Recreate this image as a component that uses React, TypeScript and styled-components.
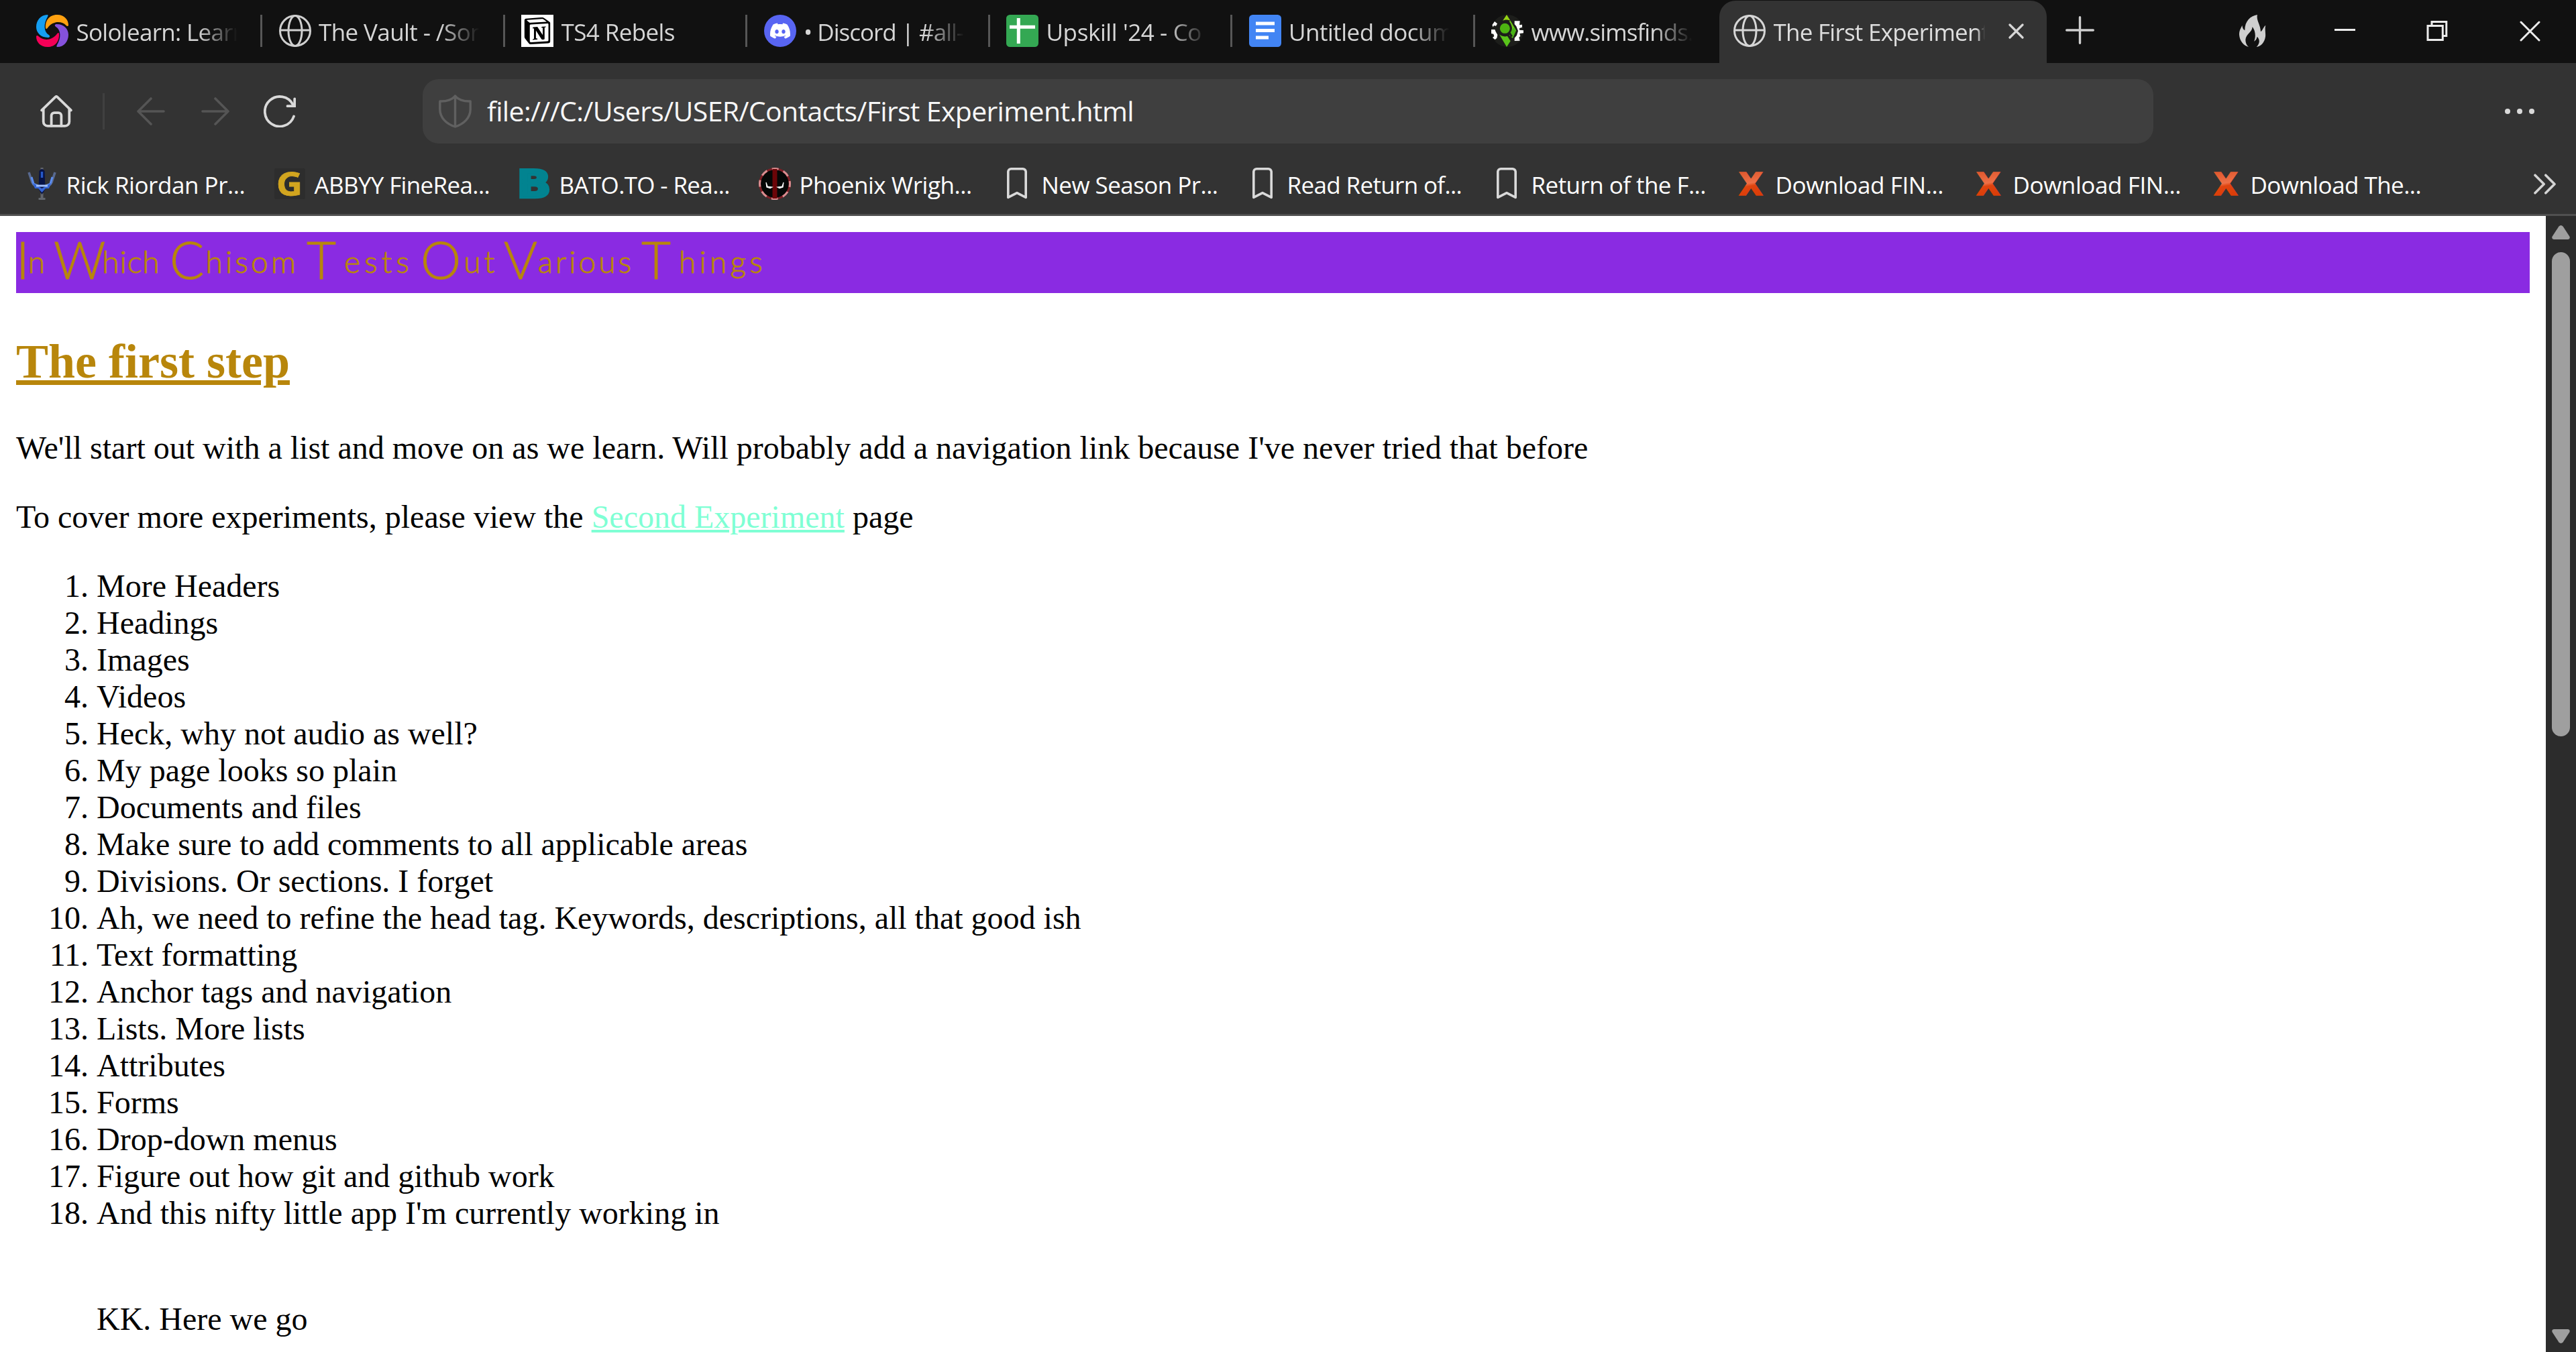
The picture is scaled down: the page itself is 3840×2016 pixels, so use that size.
import React from "react";
import styled, { createGlobalStyle } from "styled-components";
import { SiDiscord, SiNotion } from "react-icons/si";

const UI_FONT = `"Open Sans", "Noto Sans", sans-serif`;
const PAGE_FONT = `"Liberation Serif", "Times New Roman", serif`;

const GlobalStyle = createGlobalStyle`
  html, body { margin: 0; padding: 0; background: #fff; }
  body { overflow: hidden; }
  * { box-sizing: border-box; }
`;

const Window = styled.div`
  display: flex;
  flex-direction: column;
  width: 3840px;
  height: 2016px;
  overflow: hidden;
  background: #333;
  font-family: ${UI_FONT};
`;

/* ---------- tab strip ---------- */

const TabStrip = styled.div`
  display: flex;
  height: 94px;
  flex: none;
  padding-left: 29.5px;
  background: #111;
`;

const TabItem = styled.div`
  display: flex;
  flex: none;
  align-items: center;
  width: 361.5px;
  padding: 0 0 2px 24.5px;
`;

const TabIcon = styled.div<{ $bg?: string; $radius?: number }>`
  display: flex;
  flex: none;
  align-items: center;
  justify-content: center;
  width: 48px;
  height: 48px;
  border-radius: ${(p) => p.$radius ?? 0}px;
  background: ${(p) => p.$bg ?? "transparent"};
`;

const TabTitle = styled.div<{ $spacing: number }>`
  width: 242px;
  margin-left: 11.5px;
  padding-top: 4px;
  overflow: hidden;
  white-space: nowrap;
  font-size: 35px;
  line-height: 60px;
  letter-spacing: ${(p) => p.$spacing}px;
  color: #d6d6d6;
  mask-image: linear-gradient(to right, #000 75%, transparent 99%);
`;

const TabDivider = styled.div`
  width: 3px;
  height: 48px;
  margin-left: auto;
  background: #565656;
`;

const ActiveTab = styled.div`
  display: flex;
  flex: none;
  align-items: center;
  width: 488px;
  height: 93px;
  margin: 1px 0 0 3px;
  padding: 0 0 3px 21px;
  border-radius: 24px 24px 0 0;
  background: #333;
`;

const ActiveTitle = styled(TabTitle)`
  width: 315px;
  color: #dedede;
  mask-image: linear-gradient(to right, #000 96%, transparent 100%);
`;

const TabClose = styled.div`
  display: flex;
  margin-left: 35px;
`;

const NewTab = styled.div`
  display: flex;
  align-items: center;
  margin-left: 28px;
  padding-bottom: 4px;
`;

const WindowControls = styled.div`
  display: flex;
  align-items: center;
  margin-left: auto;
  padding: 0 53px 2px 0;
`;

const Control = styled.div<{ $gap?: number }>`
  display: flex;
  margin-left: ${(p) => p.$gap ?? 0}px;
`;

/* ---------- toolbar ---------- */

const Toolbar = styled.div`
  display: flex;
  align-items: center;
  flex: none;
  height: 144px;
  padding: 0 62px 0 60px;
`;

const ToolButton = styled.div<{ $ml?: number; $color?: string }>`
  display: flex;
  flex: none;
  margin-left: ${(p) => p.$ml ?? 0}px;
  color: ${(p) => p.$color ?? "#d9d9d9"};
`;

const ToolDivider = styled.div`
  flex: none;
  width: 3px;
  height: 54px;
  margin-left: 45px;
  background: #404040;
`;

const AddressBar = styled.div`
  display: flex;
  align-items: center;
  flex: none;
  width: 2580px;
  height: 96px;
  margin-left: 189px;
  padding-left: 24px;
  border-radius: 24px;
  background: #3f3f3f;
  color: #606060;
`;

const AddressText = styled.div`
  margin-left: 23px;
  padding-bottom: 2px;
  font-size: 41px;
  letter-spacing: -0.66px;
  white-space: nowrap;
  color: #f7f7f7;
`;

const MenuDots = styled.div`
  display: flex;
  gap: 10px;
  margin-left: auto;
`;

const Dot = styled.i`
  width: 8px;
  height: 8px;
  border-radius: 50%;
  background: #d9d9d9;
`;

/* ---------- bookmarks ---------- */

const BookmarkBar = styled.div`
  display: flex;
  align-items: center;
  flex: none;
  height: 84px;
  padding: 0 30px 9px 38px;
  border-bottom: 3px solid #505050;
`;

const Bookmark = styled.div<{ $width: number }>`
  display: flex;
  flex: none;
  align-items: center;
  width: ${(p) => p.$width}px;
`;

const BookmarkIcon = styled.div`
  display: flex;
  flex: none;
  width: 48px;
  height: 48px;
`;

const BookmarkLabel = styled.div<{ $spacing: number }>`
  margin-left: 12.5px;
  padding-top: 3px;
  font-size: 35px;
  line-height: 56px;
  letter-spacing: ${(p) => p.$spacing}px;
  white-space: nowrap;
  color: #fff;
`;

const Overflow = styled.div`
  display: flex;
  margin-left: auto;
`;

/* ---------- page ---------- */

const Viewport = styled.div`
  display: flex;
  flex: 1;
  min-height: 0;
  background: #fff;
`;

const Page = styled.main`
  flex: 1;
  min-width: 0;
  padding: 24px;
  overflow: hidden;
  font-family: ${PAGE_FONT};
  font-size: 48px;
  line-height: 55px;
  color: #000;
`;

const Banner = styled.h1`
  display: flex;
  height: 91px;
  margin: 0;
  background: blueviolet;
  color: darkgoldenrod;
  font-family: Lato, "Open Sans", sans-serif;
  font-size: 46px;
  font-weight: 300;
  line-height: 87px;
  -webkit-text-stroke: 0.9px darkgoldenrod;
`;

const BannerWord = styled.span<{ $width: number; $spacing: number; $cap: number }>`
  display: block;
  flex: none;
  width: ${(p) => p.$width}px;
  letter-spacing: ${(p) => p.$spacing}px;
  white-space: nowrap;

  &::first-letter {
    font-size: 76px;
    line-height: 0;
    letter-spacing: ${(p) => p.$cap}px;
    vertical-align: -9px;
  }
`;

const Heading = styled.h2`
  margin: 61px 0 60px;
  font-size: 72px;
  line-height: 82px;
  color: darkgoldenrod;
  text-decoration: underline;
`;

const Paragraph = styled.p`
  margin: 48px 0;
`;

const PageLink = styled.a`
  color: aquamarine;
  text-decoration: underline;
`;

const List = styled.ol`
  margin: 48px 0;
  padding-left: 120px;
`;

const Trailing = styled.p`
  margin: 103px 0 0;
`;

const Scrollbar = styled.div`
  display: flex;
  flex-direction: column;
  align-items: center;
  flex: none;
  width: 45px;
  padding: 14px 0 13px;
  background: #2c2c2c;
`;

const Thumb = styled.div`
  width: 27px;
  height: 722px;
  margin: 19px 0 auto;
  border-radius: 13.5px;
  background: #9f9f9f;
`;

/* ---------- icons ---------- */

const SololearnIcon = () => (
  <svg width="48" height="48" viewBox="0 0 144 144">
    <path fill="#149ef2" d="M50 0C20 0 0 25 0 55C0 80 20 102 52 102C62 102 63 95 56 90C33 76 32 40 51 9C54 3 53 0 50 0Z" />
    <path fill="#ffa110" d="M42 58C40 30 55 0 94 0C125 0 144 22 144 46C144 52 138 52 134 48C115 28 75 25 50 60C46 64 42 64 42 58Z" />
    <path fill="#8551dc" d="M94 144C124 144 144 119 144 89C144 64 124 42 92 42C82 42 81 49 88 54C111 68 112 104 93 135C90 141 91 144 94 144Z" />
    <path fill="#f50057" d="M102 86C104 114 89 144 50 144C19 144 0 122 0 98C0 92 6 92 10 96C29 116 69 119 94 84C98 80 102 80 102 86Z" />
  </svg>
);

const GlobeIcon = ({ color = "#cfcfcf" }: { color?: string }) => (
  <svg width="48" height="48" viewBox="0 0 48 48" fill="none" stroke={color} strokeWidth="3">
    <circle cx="24" cy="24" r="22.5" />
    <ellipse cx="24" cy="24" rx="10" ry="22.5" />
    <path d="M1.5 23h45" />
  </svg>
);

const SheetsIcon = () => (
  <svg width="48" height="48" viewBox="0 0 48 48">
    <rect width="48" height="48" rx="5.5" fill="#34a853" />
    <path d="M5 18.3h38M18.3 5v38" stroke="#fff" strokeWidth="5" />
  </svg>
);

const DocsIcon = () => (
  <svg width="48" height="48" viewBox="0 0 48 48">
    <rect width="48" height="48" rx="5.5" fill="#4285f4" />
    <path d="M10 13h28M10 23.5h28M10 34h19" stroke="#fff" strokeWidth="5" />
  </svg>
);

const SimsIcon = () => (
  <svg width="48" height="48" viewBox="0 0 144 144">
    <circle cx="72" cy="72" r="72" fill="#1d1e1b" />
    <path fill="#95d413" d="M69 0L86 27C74 21 60 21 51 27Z" />
    <path fill="#6ccb16" d="M86 27L111 70L96 104L80 92C96 74 96 48 80 30Z" />
    <path fill="#49b316" d="M96 104L78 78L104 56L111 70Z" />
    <path fill="#59c41a" d="M36 88C45 96 60 100 72 95L86 118L69 144Z" />
    <circle cx="61" cy="61" r="27" fill="#4db511" stroke="#1d1e1b" strokeWidth="9" />
    <path d="M82 82L92 98" stroke="#1d1e1b" strokeWidth="9" />
    <g fill="#fff">
      <path d="M4 46L15 30L27 40L21 50L12 48L8 55Z" />
      <path d="M0 66L16 66L20 76L28 90L25 104L17 111L6 103L13 96L10 86L0 84Z" />
      <path d="M104 28L128 28L126 46L138 44L138 56L126 60L126 68L144 70L144 82L127 84L130 96L124 101L128 116L104 117L104 104L114 92L120 72L112 52L104 42Z" />
    </g>
  </svg>
);

const CrossIcon = ({ size, stroke, color }: { size: number; stroke: number; color: string }) => (
  <svg width={size} height={size} viewBox={`0 0 ${size} ${size}`} stroke={color} strokeWidth={stroke} strokeLinecap="round">
    <path d={`M2 2L${size - 2} ${size - 2}M${size - 2} 2L2 ${size - 2}`} />
  </svg>
);

const PlusIcon = () => (
  <svg width="43" height="42" viewBox="0 0 43 42" stroke="#cfcfcf" strokeWidth="3.4" strokeLinecap="round">
    <path d="M21.5 1.7v38.6M1.7 21h39.6" />
  </svg>
);

const FireIcon = () => (
  <svg width="40" height="48" viewBox="0 0 120 144" fill="#cfcfcf">
    <path d="M81 0C75 25 95 42 96 76C104 70 108 55 118 47C113 65 119 80 117 98C113 125 96 141 77 144C93 128 93 110 80 98C78 108 74 115 66 119C75 100 73 72 59 54C57 80 30 85 28 112C28 126 33 138 42 144C20 138 2 118 0 90C-1 70 8 60 13 47C14 58 18 66 25 70C24 32 48 5 81 0Z" />
  </svg>
);

const RestoreIcon = () => (
  <svg width="32" height="30" viewBox="0 0 32 30" fill="none" stroke="#ececec" strokeWidth="3">
    <path d="M8 7.5V1.5H29.8V22.5H24.5" />
    <rect x="2" y="7.5" width="22.3" height="21" />
  </svg>
);

const HomeIcon = () => (
  <svg width="48" height="48" viewBox="0 0 48 48" fill="none" stroke="currentColor" strokeWidth="3.8" strokeLinejoin="round" strokeLinecap="round">
    <path d="M2.2 22.4L22.6 2.6a2 2 0 0 1 2.8 0L45.8 22.4" />
    <path d="M4.7 21V39.5a6.4 6.4 0 0 0 6.4 6.4H36.9a6.4 6.4 0 0 0 6.4-6.4V21" />
    <path d="M16.6 45.5V30.5a4.4 4.4 0 0 1 4.4-4.4h6a4.4 4.4 0 0 1 4.4 4.4V45.5" />
  </svg>
);

const ArrowIcon = ({ flip }: { flip?: boolean }) => (
  <svg width="42" height="42" viewBox="0 0 42 42" fill="none" stroke="currentColor" strokeWidth="3.6" strokeLinecap="round" strokeLinejoin="round">
    <path d={flip ? "M2 21H40M21 2L40 21L21 40" : "M40 21H2M21 2L2 21L21 40"} />
  </svg>
);

const ReloadIcon = () => (
  <svg width="48" height="48" viewBox="0 0 48 48" fill="none" stroke="currentColor" strokeWidth="3.8" strokeLinecap="round">
    <path d="M45 31.5A22.2 22.2 0 1 1 43.8 14.2" />
    <path d="M46.2 5.5V16.2H35.5" />
  </svg>
);

const ShieldIcon = () => (
  <svg width="49" height="50" viewBox="0 0 49 50" fill="none" stroke="currentColor" strokeWidth="3.4" strokeLinejoin="round">
    <path d="M24.5 2C21 7 12 10.5 1.8 10V22C1.8 35 12 44 24.5 48C37 44 47.2 35 47.2 22V10C37 10.5 28 7 24.5 2ZM24.5 2V48" />
  </svg>
);

const TridentIcon = () => (
  <svg width="48" height="48" viewBox="0 0 48 48">
    <path d="M5 7L10 22Q13 28 20 29H29Q36 28 39 22L44 7" fill="none" stroke="#58698f" strokeWidth="3.6" />
    <path d="M9 14L12 24L21 28" fill="none" stroke="#5c8df0" strokeWidth="3" />
    <path d="M40 14L37 24L28 28" fill="none" stroke="#5c8df0" strokeWidth="3" />
    <path d="M24.5 0V6M24.5 38V48M19.5 47h10" stroke="#63676e" strokeWidth="4" />
    <path d="M20.5 5Q24.5 -1 28.5 5L29.5 32L24.5 40L19.5 32Z" fill="#071347" />
    <path d="M24.5 6V15" stroke="#2658c9" strokeWidth="3.4" />
    <path d="M11 23L24.5 31L38 23L35 31H30L24.5 37L19 31H14Z" fill="#3565d4" />
    <path d="M16 27H33" stroke="#a3c2ff" strokeWidth="3" />
  </svg>
);

const LetterGIcon = () => (
  <svg width="48" height="48" viewBox="0 0 48 48">
    <rect x="1" y="1" width="46" height="46" rx="3" fill="#2d2d2d" />
    <text x="4" y="42" fontFamily="Open Sans, sans-serif" fontWeight="700" fontSize="48" textLength="39" lengthAdjust="spacingAndGlyphs" fill="#d2a51f" stroke="#d2a51f" strokeWidth="0.8">G</text>
  </svg>
);

const LetterBIcon = () => (
  <svg width="48" height="48" viewBox="0 0 48 48">
    <text x="-2.5" y="44.5" fontFamily="DejaVu Sans, sans-serif" fontWeight="700" fontSize="57" textLength="51" lengthAdjust="spacingAndGlyphs" fill="#028390" stroke="#028390" strokeWidth="4">B</text>
  </svg>
);

const MaskIcon = () => (
  <svg width="48" height="48" viewBox="0 0 48 48">
    <circle cx="24" cy="24" r="22.3" fill="#050807" stroke="#7d1f26" strokeWidth="3" />
    <circle cx="24" cy="24" r="22.5" fill="none" stroke="#d98d90" strokeWidth="3" strokeDasharray="10 7.67" strokeDashoffset="5" />
    <path d="M24 2V46" stroke="#6b0508" strokeWidth="7" />
    <path d="M11 22L13 28L20 29L17 30.5L12 29Z M37 22L35 28L28 29L31 30.5L36 29Z" fill="#fff" stroke="#fff" strokeWidth="1.2" />
  </svg>
);

const BookmarkOutline = () => (
  <svg width="48" height="48" viewBox="0 0 48 48" fill="none" stroke="#d9d9d9" strokeWidth="3.6" strokeLinejoin="round">
    <path d="M10.8 44.4V6.3a4.5 4.5 0 0 1 4.5-4.5H32.7a4.5 4.5 0 0 1 4.5 4.5V44.4L24 37.6Z" />
  </svg>
);

const LetterXIcon = () => (
  <svg width="48" height="48" viewBox="0 0 48 48">
    <defs>
      <linearGradient id="xfill" x1="0" y1="0" x2="0.12" y2="1">
        <stop offset="0.2" stopColor="#e0592f" />
        <stop offset="0.52" stopColor="#ee7047" />
        <stop offset="0.6" stopColor="#e0440f" />
        <stop offset="1" stopColor="#d83a05" />
      </linearGradient>
    </defs>
    <text x="6" y="41" fontFamily="DejaVu Sans, sans-serif" fontWeight="700" fontSize="47" textLength="36" lengthAdjust="spacingAndGlyphs" fill="url(#xfill)" stroke="url(#xfill)" strokeWidth="1.6">X</text>
  </svg>
);

const ChevronsIcon = () => (
  <svg width="33" height="31" viewBox="0 0 33 31" fill="none" stroke="#d4d4d4" strokeWidth="3.6" strokeLinecap="round" strokeLinejoin="round">
    <path d="M2 2.2L15.2 15.5L2 28.8M17.8 2.2L31 15.5L17.8 28.8" />
  </svg>
);

const ScrollArrow = ({ down }: { down?: boolean }) => (
  <svg width="27" height="21" viewBox="0 0 27 21" fill="#9f9f9f">
    <path
      transform={down ? "rotate(180 13.5 10.5)" : undefined}
      d="M10.3 1.8Q13.5 -1.6 16.7 1.8L26.3 16.5Q27.8 20.6 24 21H3Q-0.8 20.6 0.7 16.5Z"
    />
  </svg>
);

/* ---------- data ---------- */

const tabs = [
  { title: "Sololearn: Learn", spacing: -0.7, icon: <SololearnIcon /> },
  { title: "The Vault - /Son", spacing: -0.6, icon: <GlobeIcon /> },
  { title: "TS4 Rebels", spacing: -0.6, icon: <SiNotion size={40} color="#000" />, bg: "#fff" },
  { title: "• Discord | #all-", spacing: -1, icon: <SiDiscord size={30} color="#fff" />, bg: "#5865f2", radius: 24 },
  { title: "Upskill '24 - Co", spacing: -0.4, icon: <SheetsIcon /> },
  { title: "Untitled docum", spacing: -0.5, icon: <DocsIcon /> },
  { title: "www.simsfinds.", spacing: -0.9, icon: <SimsIcon /> },
];

const bookmarks = [
  { label: "Rick Riordan Pr...", width: 370, spacing: -0.45, icon: <TridentIcon /> },
  { label: "ABBYY FineRea...", width: 365, spacing: -0.65, icon: <LetterGIcon /> },
  { label: "BATO.TO - Rea...", width: 358, spacing: -0.65, icon: <LetterBIcon /> },
  { label: "Phoenix Wrigh...", width: 361, spacing: -0.45, icon: <MaskIcon /> },
  { label: "New Season Pr...", width: 366, spacing: -0.55, icon: <BookmarkOutline /> },
  { label: "Read Return of...", width: 364, spacing: -0.65, icon: <BookmarkOutline /> },
  { label: "Return of the F...", width: 364, spacing: -0.55, icon: <BookmarkOutline /> },
  { label: "Download FIN...", width: 354, spacing: -0.4, icon: <LetterXIcon /> },
  { label: "Download FIN...", width: 354, spacing: -0.4, icon: <LetterXIcon /> },
  { label: "Download The...", width: 354, spacing: -0.55, icon: <LetterXIcon /> },
];

const bannerWords = [
  { text: "In", width: 56, spacing: 0, cap: -2 },
  { text: "Which", width: 173, spacing: 0.9, cap: -5 },
  { text: "Chisom", width: 204, spacing: 4.2, cap: 2 },
  { text: "Tests", width: 170, spacing: 6, cap: 12 },
  { text: "Out", width: 124, spacing: 5, cap: 4 },
  { text: "Various", width: 205, spacing: 4, cap: 1 },
  { text: "Things", width: 184, spacing: 5.2, cap: 12 },
];

const items = [
  "More Headers",
  "Headings",
  "Images",
  "Videos",
  "Heck, why not audio as well?",
  "My page looks so plain",
  "Documents and files",
  "Make sure to add comments to all applicable areas",
  "Divisions. Or sections. I forget",
  "Ah, we need to refine the head tag. Keywords, descriptions, all that good ish",
  "Text formatting",
  "Anchor tags and navigation",
  "Lists. More lists",
  "Attributes",
  "Forms",
  "Drop-down menus",
  "Figure out how git and github work",
  "And this nifty little app I'm currently working in",
];

export default function App() {
  return (
    <Window>
      <GlobalStyle />
      <TabStrip>
        {tabs.map((tab, i) => (
          <TabItem key={tab.title}>
            <TabIcon $bg={tab.bg} $radius={tab.radius}>{tab.icon}</TabIcon>
            <TabTitle $spacing={tab.spacing}>{tab.title}</TabTitle>
            {i < tabs.length - 1 && <TabDivider />}
          </TabItem>
        ))}
        <ActiveTab>
          <TabIcon><GlobeIcon color="#d6d6d6" /></TabIcon>
          <ActiveTitle $spacing={-0.75}>The First Experiment</ActiveTitle>
          <TabClose><CrossIcon size={23} stroke={3.2} color="#d6d6d6" /></TabClose>
        </ActiveTab>
        <NewTab><PlusIcon /></NewTab>
        <WindowControls>
          <Control><FireIcon /></Control>
          <Control $gap={102}>
            <svg width="31" height="30" viewBox="0 0 31 30"><rect y="12" width="31" height="3" fill="#ececec" /></svg>
          </Control>
          <Control $gap={106}><RestoreIcon /></Control>
          <Control $gap={107}><CrossIcon size={31} stroke={3} color="#ececec" /></Control>
        </WindowControls>
      </TabStrip>

      <Toolbar>
        <ToolButton><HomeIcon /></ToolButton>
        <ToolDivider />
        <ToolButton $ml={48} $color="#555"><ArrowIcon /></ToolButton>
        <ToolButton $ml={54} $color="#555"><ArrowIcon flip /></ToolButton>
        <ToolButton $ml={51}><ReloadIcon /></ToolButton>
        <AddressBar>
          <ShieldIcon />
          <AddressText>file:///C:/Users/USER/Contacts/First Experiment.html</AddressText>
        </AddressBar>
        <MenuDots><Dot /><Dot /><Dot /></MenuDots>
      </Toolbar>

      <BookmarkBar>
        {bookmarks.map((b, i) => (
          <Bookmark key={i} $width={b.width}>
            <BookmarkIcon>{b.icon}</BookmarkIcon>
            <BookmarkLabel $spacing={b.spacing}>{b.label}</BookmarkLabel>
          </Bookmark>
        ))}
        <Overflow><ChevronsIcon /></Overflow>
      </BookmarkBar>

      <Viewport>
        <Page>
          <Banner>
            {bannerWords.map((w) => (
              <BannerWord key={w.text} $width={w.width} $spacing={w.spacing} $cap={w.cap}>{w.text}</BannerWord>
            ))}
          </Banner>
          <Heading>The first step</Heading>
          <Paragraph>
            We'll start out with a list and move on as we learn. Will probably add a navigation link because I've never tried that before
          </Paragraph>
          <Paragraph>
            To cover more experiments, please view the <PageLink>Second Experiment</PageLink> page
          </Paragraph>
          <List>
            {items.map((item) => <li key={item}>{item}</li>)}
            <Trailing>KK. Here we go</Trailing>
          </List>
        </Page>
        <Scrollbar>
          <ScrollArrow />
          <Thumb />
          <ScrollArrow down />
        </Scrollbar>
      </Viewport>
    </Window>
  );
}
